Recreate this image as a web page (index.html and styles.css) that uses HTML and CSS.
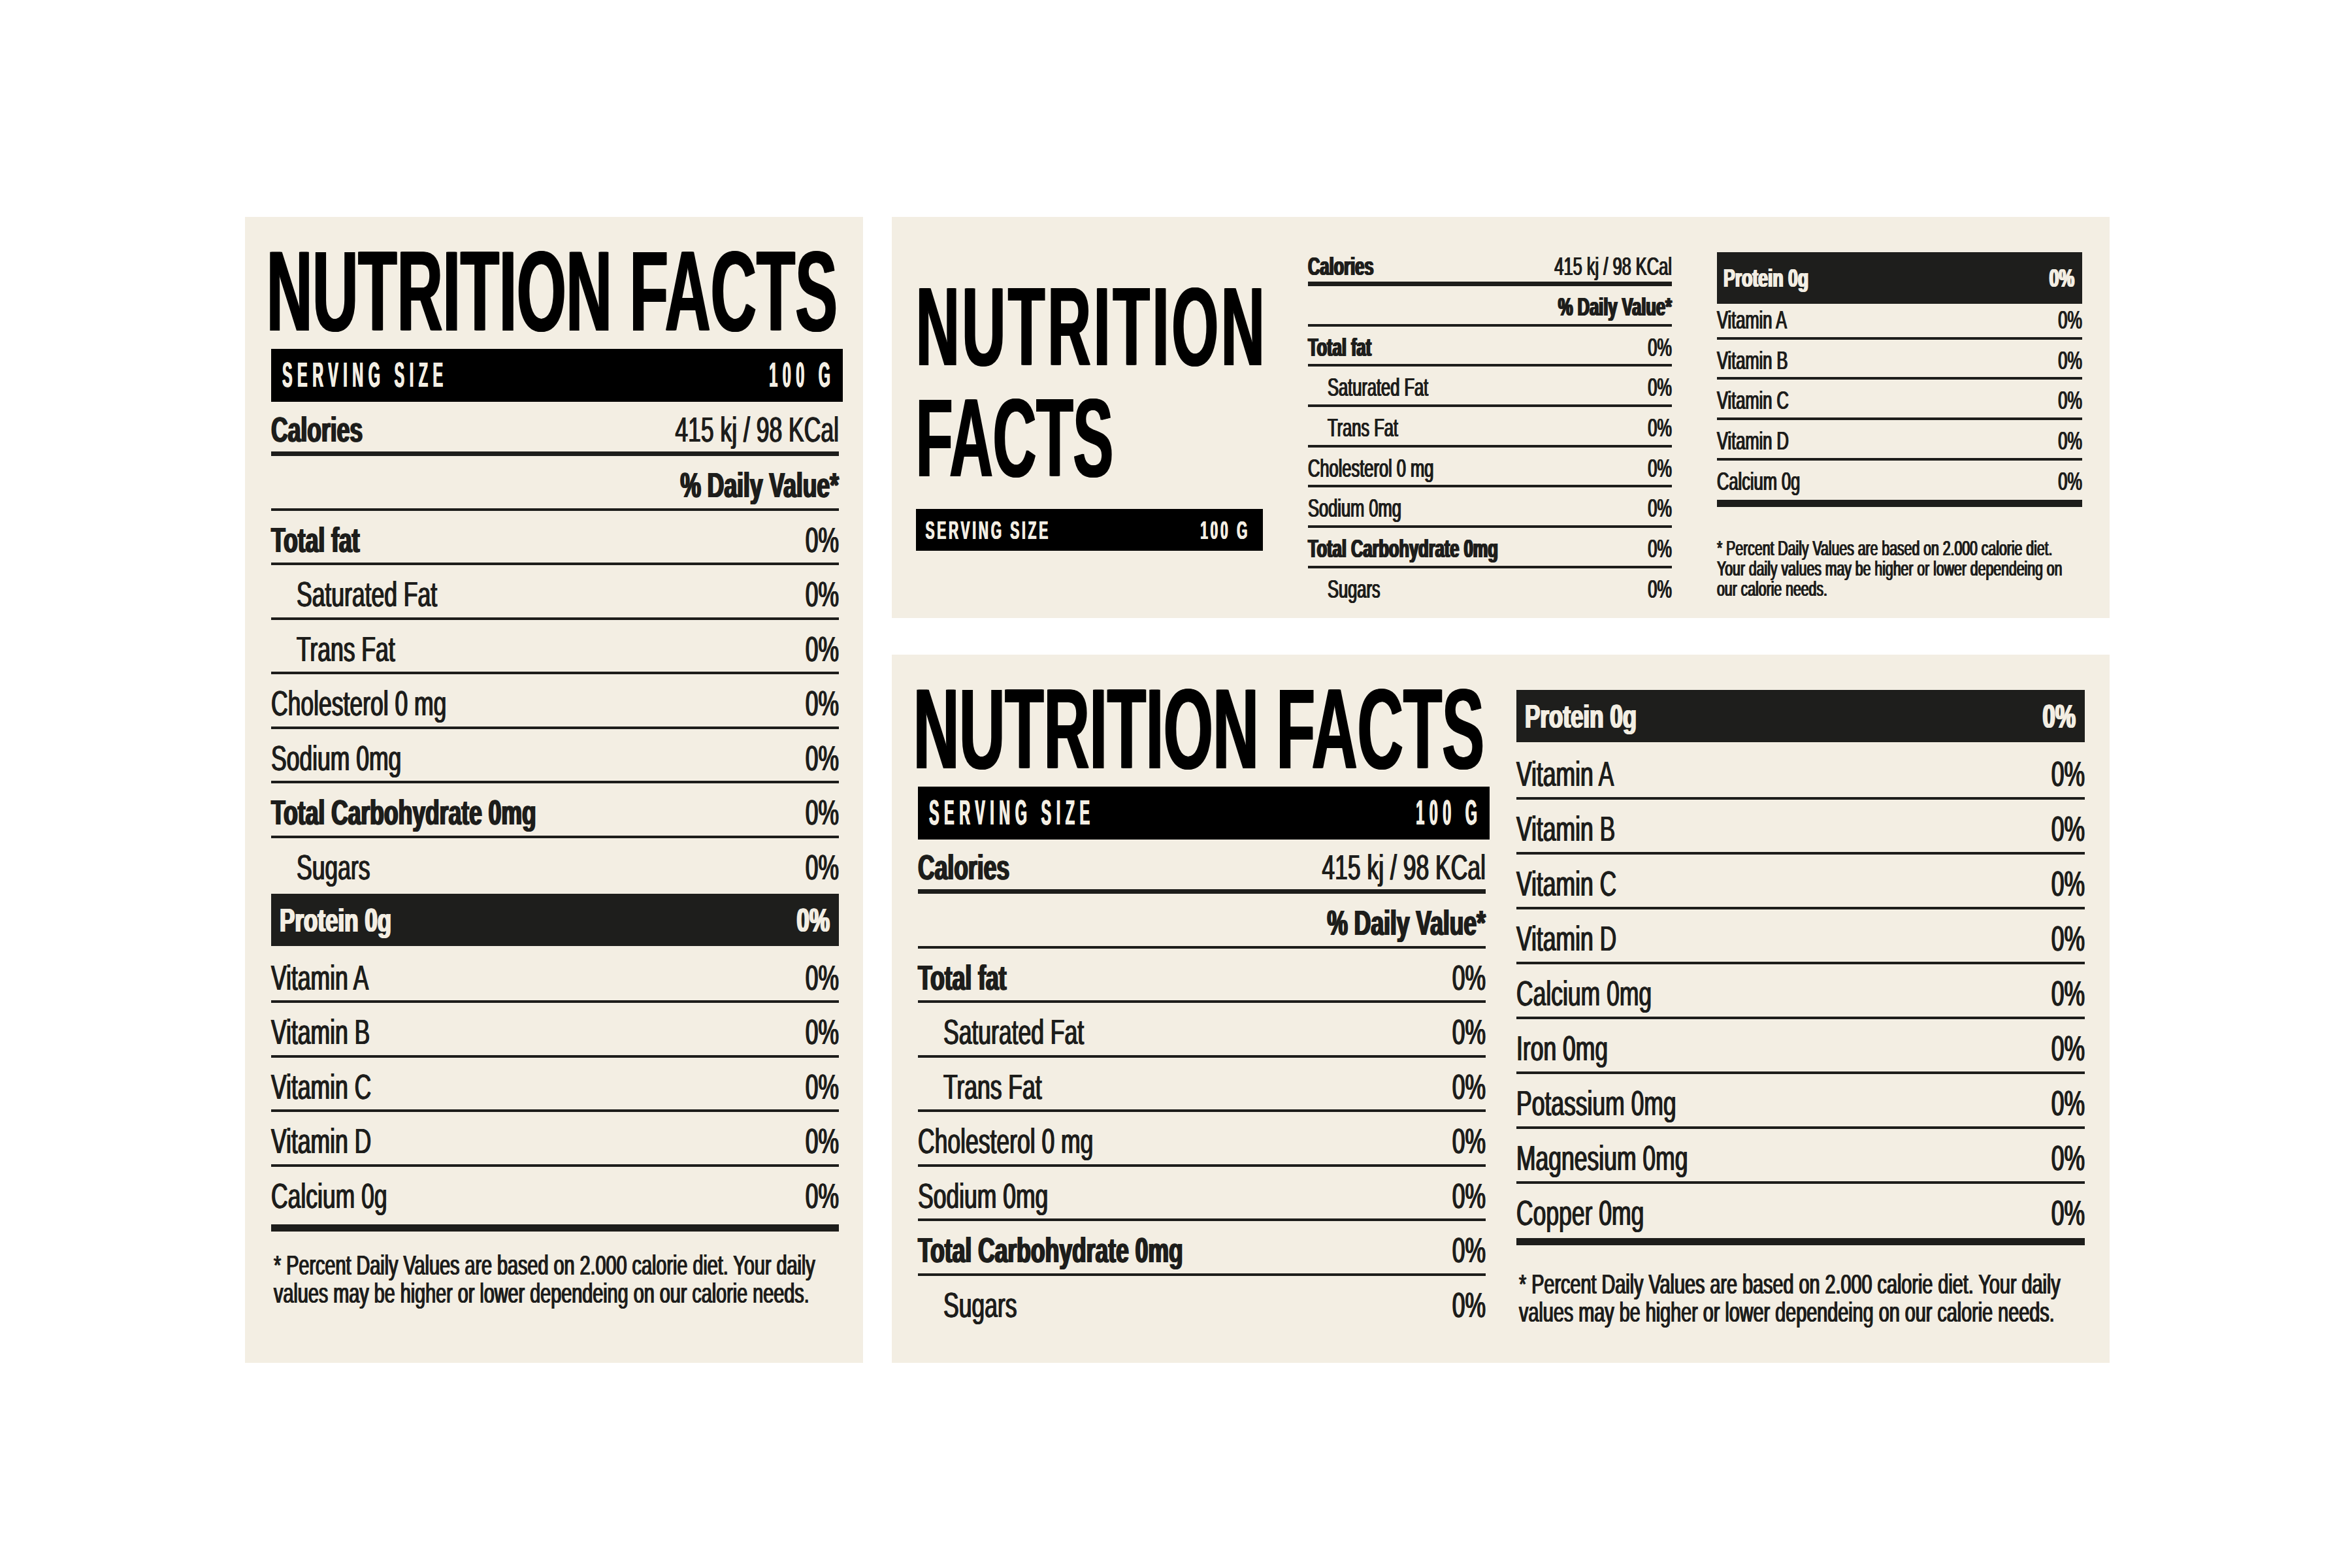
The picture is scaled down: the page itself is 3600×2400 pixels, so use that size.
FILE: index.html
```html
<!DOCTYPE html>
<html lang="en">
<head>
<meta charset="utf-8">
<title>Nutrition Facts Labels</title>
<link rel="stylesheet" href="styles.css">
</head>
<body>
<div class="page">

  <section class="card c1 lg">
    <h1 class="title"><span class="t tt">NUTRITION FACTS</span></h1>
    <div class="serving"><span class="t st">SERVING SIZE</span><span class="t st">100 G</span></div>
    <div class="tbl">
      <div class="row cal"><span class="t b">Calories</span><span class="t">415 kj / 98 KCal</span></div>
      <div class="row dv"><span class="t b">% Daily Value*</span></div>
      <div class="row"><span class="t b">Total fat</span><span class="t">0%</span></div>
      <div class="row sub"><span class="t">Saturated Fat</span><span class="t">0%</span></div>
      <div class="row sub"><span class="t">Trans Fat</span><span class="t">0%</span></div>
      <div class="row"><span class="t">Cholesterol 0 mg</span><span class="t">0%</span></div>
      <div class="row"><span class="t">Sodium 0mg</span><span class="t">0%</span></div>
      <div class="row"><span class="t b">Total Carbohydrate 0mg</span><span class="t">0%</span></div>
      <div class="row sub open"><span class="t">Sugars</span><span class="t">0%</span></div>
      <div class="bar"><span class="t b">Protein 0g</span><span class="t b">0%</span></div>
      <div class="row"><span class="t">Vitamin A</span><span class="t">0%</span></div>
      <div class="row"><span class="t">Vitamin B</span><span class="t">0%</span></div>
      <div class="row"><span class="t">Vitamin C</span><span class="t">0%</span></div>
      <div class="row"><span class="t">Vitamin D</span><span class="t">0%</span></div>
      <div class="row end"><span class="t">Calcium 0g</span><span class="t">0%</span></div>
    </div>
    <div class="note"><span class="t">* Percent Daily Values are based on 2.000 calorie diet. Your daily<br>values may be higher or lower dependeing on our calorie needs.</span></div>
  </section>

  <div class="stack">

    <section class="card c2 sm">
      <div class="col left">
        <h1 class="title2"><span class="t tt">NUTRITION<br>FACTS</span></h1>
        <div class="serving"><span class="t st">SERVING SIZE</span><span class="t st">100 G</span></div>
      </div>
      <div class="col mid tbl">
        <div class="row cal"><span class="t b">Calories</span><span class="t">415 kj / 98 KCal</span></div>
        <div class="row dv"><span class="t b">% Daily Value*</span></div>
        <div class="row"><span class="t b">Total fat</span><span class="t">0%</span></div>
        <div class="row sub"><span class="t">Saturated Fat</span><span class="t">0%</span></div>
        <div class="row sub"><span class="t">Trans Fat</span><span class="t">0%</span></div>
        <div class="row"><span class="t">Cholesterol 0 mg</span><span class="t">0%</span></div>
        <div class="row"><span class="t">Sodium 0mg</span><span class="t">0%</span></div>
        <div class="row"><span class="t b">Total Carbohydrate 0mg</span><span class="t">0%</span></div>
        <div class="row sub open"><span class="t">Sugars</span><span class="t">0%</span></div>
      </div>
      <div class="col right">
        <div class="tbl">
          <div class="bar"><span class="t b">Protein 0g</span><span class="t b">0%</span></div>
          <div class="row"><span class="t">Vitamin A</span><span class="t">0%</span></div>
          <div class="row"><span class="t">Vitamin B</span><span class="t">0%</span></div>
          <div class="row"><span class="t">Vitamin C</span><span class="t">0%</span></div>
          <div class="row"><span class="t">Vitamin D</span><span class="t">0%</span></div>
          <div class="row end"><span class="t">Calcium 0g</span><span class="t">0%</span></div>
        </div>
        <div class="note"><span class="t">* Percent Daily Values are based on 2.000 calorie diet.<br>Your daily values may be higher or lower dependeing on<br>our calorie needs.</span></div>
      </div>
    </section>

    <section class="card c3 lg">
      <div class="col left">
        <h1 class="title"><span class="t tt">NUTRITION FACTS</span></h1>
        <div class="serving"><span class="t st">SERVING SIZE</span><span class="t st">100 G</span></div>
        <div class="tbl">
          <div class="row cal"><span class="t b">Calories</span><span class="t">415 kj / 98 KCal</span></div>
          <div class="row dv"><span class="t b">% Daily Value*</span></div>
          <div class="row"><span class="t b">Total fat</span><span class="t">0%</span></div>
          <div class="row sub"><span class="t">Saturated Fat</span><span class="t">0%</span></div>
          <div class="row sub"><span class="t">Trans Fat</span><span class="t">0%</span></div>
          <div class="row"><span class="t">Cholesterol 0 mg</span><span class="t">0%</span></div>
          <div class="row"><span class="t">Sodium 0mg</span><span class="t">0%</span></div>
          <div class="row"><span class="t b">Total Carbohydrate 0mg</span><span class="t">0%</span></div>
          <div class="row sub open"><span class="t">Sugars</span><span class="t">0%</span></div>
        </div>
      </div>
      <div class="col right">
        <div class="tbl">
          <div class="bar"><span class="t b">Protein 0g</span><span class="t b">0%</span></div>
          <div class="row"><span class="t">Vitamin A</span><span class="t">0%</span></div>
          <div class="row"><span class="t">Vitamin B</span><span class="t">0%</span></div>
          <div class="row"><span class="t">Vitamin C</span><span class="t">0%</span></div>
          <div class="row"><span class="t">Vitamin D</span><span class="t">0%</span></div>
          <div class="row"><span class="t">Calcium 0mg</span><span class="t">0%</span></div>
          <div class="row"><span class="t">Iron 0mg</span><span class="t">0%</span></div>
          <div class="row"><span class="t">Potassium 0mg</span><span class="t">0%</span></div>
          <div class="row"><span class="t">Magnesium 0mg</span><span class="t">0%</span></div>
          <div class="row end"><span class="t">Copper 0mg</span><span class="t">0%</span></div>
        </div>
        <div class="note"><span class="t">* Percent Daily Values are based on 2.000 calorie diet. Your daily<br>values may be higher or lower dependeing on our calorie needs.</span></div>
      </div>
    </section>

  </div>
</div>
</body>
</html>
```

FILE: styles.css
```css
:root {
  --cream: #f3eee3;
  --ink: #1d1d1b;
  --bar: #1e1e1c;
}

* { box-sizing: border-box; }

body {
  margin: 0;
  background: #ffffff;
  font-family: "Liberation Sans", Arial, sans-serif;
  color: var(--ink);
}

.page {
  display: flex;
  align-items: flex-start;
  gap: 44px;
  padding: 332px 0 0 375px;
}

.stack {
  display: flex;
  flex-direction: column;
  gap: 56px;
  width: 1864px;
}

.card { background: var(--cream); }

/* Condensed lettering: the installed faces are too wide, so each run is set
   at a reduced size (its real width) and stretched back up vertically. */
.t {
  --fs: 53px;
  --sx: .67;
  display: inline-block;
  white-space: nowrap;
  font-size: calc(var(--fs) * var(--sx));
  line-height: calc(var(--lh, var(--fs)) * var(--sx));
  transform: scaleY(calc(1 / var(--sx)));
  transform-origin: 0 0;
  text-shadow: .7px 0 currentColor, -.7px 0 currentColor;
}
.b {
  font-weight: 700;
  text-shadow: 1.1px 0 currentColor, -1.1px 0 currentColor;
}

.tt {
  color: #000;
  font-weight: 700;
  text-shadow: 1.2px 0 #000, -1.2px 0 #000;
}

.title, .title2 { margin: 0; font-weight: 700; }

.st {
  font-weight: 700;
  color: var(--cream);
  text-shadow: .5px 0 var(--cream), -.5px 0 var(--cream);
}

.serving {
  display: flex;
  align-items: flex-start;
  justify-content: space-between;
  background: #000;
}

.row {
  display: flex;
  align-items: flex-start;
  justify-content: space-between;
  border-bottom: solid var(--ink);
}
.row.dv { justify-content: flex-end; }
.row.open { border-bottom: 0; }

.bar {
  display: flex;
  align-items: flex-start;
  justify-content: space-between;
  background: var(--bar);
  color: var(--cream);
}
.bar .t { --sx: .7; }

.note .t { display: block; }

/* ---------- large label (cards 1 and 3) ---------- */
.lg .title { height: 175px; }
.lg .title .t { --fs: 175px; --sx: .555; margin-left: -7px; }

.lg .serving {
  margin-top: 1px;
  height: 81px;
  padding: 14px 11.5px 0 17px;
}
.lg .serving .st { --fs: 54.5px; --sx: .43; letter-spacing: 7.5px; }

.lg .tbl { width: 869px; }

.lg .row {
  height: 83.5px;
  padding-top: 20px;
  border-bottom-width: 4px;
}
.lg .row.cal {
  height: 83px;
  padding-top: 18px;
  border-bottom-width: 7px;
}
.lg .row.sub { padding-left: 39px; }
.lg .row.open { height: 85.5px; }

.lg .bar {
  height: 80px;
  padding: 15px 14px 0 13px;
}
.lg .bar .t { --fs: 50px; }
.lg .bar + .row { margin-top: 3.5px; }

.lg .row.end {
  height: 99px;
  border-bottom-width: 11px;
}

.lg .note {
  height: 86px;
  margin-top: 30px;
  padding-left: 4px;
}
.lg .note .t { --fs: 43px; }

/* card 1 */
.c1 {
  width: 946px;
  height: 1754px;
  padding: 26px 31px 0 40px;
}

/* card 3 */
.c3 {
  height: 1084px;
  display: grid;
  grid-template-columns: 875px 870px;
  column-gap: 41px;
  align-items: start;
  padding: 26px 38px 0 40px;
}
.c3 .right { padding-top: 28px; }
.c3 .right .tbl { width: 870px; }
.c3 .right .row { height: 84px; }
.c3 .right .row.end { height: 94.5px; }
.c3 .right .note { margin-top: 38px; }

/* ---------- small label (card 2) ---------- */
.c2 {
  height: 614px;
  display: grid;
  grid-template-columns: 531px 557px 559px;
  column-gap: 69px;
  align-items: start;
  padding: 0 42px 0 37px;
}
.c2 .left { padding-top: 85px; }
.c2 .mid { padding-top: 57.5px; }
.c2 .right { padding-top: 54px; }

.sm .t { --fs: 38px; }

.sm .title2 { height: 340px; }
.sm .title2 .t {
  --fs: 170px;
  --sx: .542;
  display: block;
  width: max-content;
}
.sm .title2 .t::first-line { letter-spacing: 4px; }

.sm .serving {
  margin-top: 22px;
  height: 64px;
  padding: 13px 20px 0 14.5px;
}
.sm .serving .st { --fs: 39px; --sx: .54; letter-spacing: 3.7px; }

.sm .row {
  height: 61.7px;
  padding-top: 14px;
  border-bottom-width: 4px;
}
.sm .row.cal {
  height: 48.5px;
  padding-top: 0;
  border-bottom-width: 7px;
}
.sm .row.sub { padding-left: 30px; }
.sm .row.open { height: 52px; }

.sm .bar {
  height: 79px;
  padding: 22px 12px 0 10px;
}
.sm .bar + .row { height: 54.7px; padding-top: 7px; }

.sm .row.end {
  height: 71px;
  border-bottom-width: 11px;
}

.sm .note {
  height: 93px;
  margin-top: 49px;
}
.sm .note .t { --fs: 31.5px; --lh: 31px; --sx: .675; }
```
